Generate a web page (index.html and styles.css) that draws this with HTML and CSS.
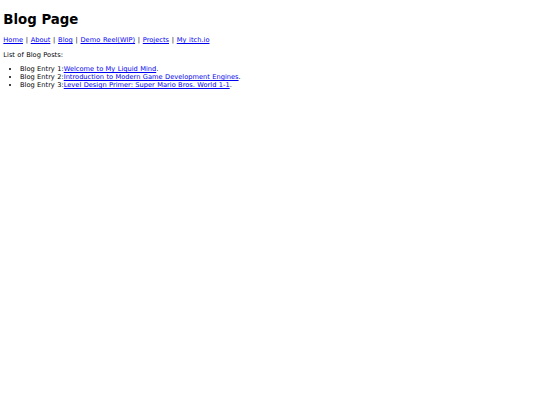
FILE: index.html
```html
<!DOCTYPE html>
<html>
<head>
<meta charset="utf-8">
<title>Blog Page</title>
<link rel="stylesheet" href="styles.css">
</head>
<body>
<h1 class="title">Blog Page</h1>
<p class="nav"><a href="#">Home</a> | <a href="#">About</a> | <a href="#">Blog</a> | <a href="#">Demo Reel(WIP)</a> | <a href="#">Projects</a> | <a href="#">My itch.io</a></p>
<p class="intro">List of Blog Posts:</p>
<ul class="posts">
<li>Blog Entry 1:<a href="#">Welcome to My Liquid Mind</a>.</li>
<li>Blog Entry 2:<a href="#">Introduction to Modern Game Development Engines</a>.</li>
<li>Blog Entry 3:<a href="#">Level Design Primer: Super Mario Bros. World 1-1</a>.</li>
</ul>
</body>
</html>
```
FILE: styles.css
```css
html { background: #fff; }
body {
  margin: 3.33px;
  font-family: "DejaVu Sans", Verdana, sans-serif;
  font-size: 6.667px;
  line-height: 7.917px;
  word-spacing: 0.28px;
  color: #000;
}
.title {
  font-size: 13.333px;
  line-height: 15.833px;
  font-weight: bold;
  word-spacing: 0;
  margin: 8.93px 0;
}
.nav {
  margin: 6.667px 0;
  word-spacing: 0.6px;
}
.intro {
  margin: 6.667px 0;
}
.posts {
  margin: 6.667px 0;
  padding-left: 16.67px;
}
a { color: #0000ee; text-decoration: underline; }
```
